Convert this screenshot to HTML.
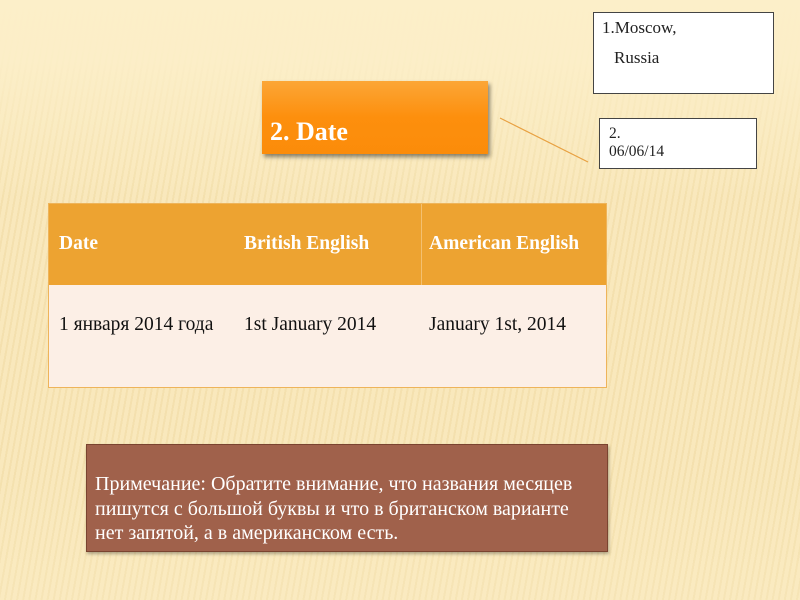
<!DOCTYPE html>
<html><head><meta charset="utf-8"><style>
body{margin:0;width:800px;height:600px;overflow:hidden;position:relative;font-family:"Liberation Serif","Noto Serif CJK SC",serif;
background:
linear-gradient(to bottom,#fcefc9 0px,rgba(252,239,201,0.9) 60px,rgba(252,239,201,0) 200px,rgba(252,239,201,0) 470px,rgba(252,239,201,0.3) 600px),
repeating-linear-gradient(100deg,rgba(220,190,110,0.18) 0 2px,rgba(0,0,0,0) 2px 6px),
#f9e8bc;}
.abs{position:absolute;box-sizing:border-box;white-space:nowrap}
</style></head><body>
<div class="abs" style="left:262px;top:81px;width:226px;height:73px;background:linear-gradient(#fca636,#fd8f0d 50%,#fb8c0a);box-shadow:2px 3px 4px rgba(0,0,0,0.45);color:#fff;font-weight:bold;font-size:26px;padding:36px 0 0 8px">2. Date</div>
<svg class="abs" style="left:0;top:0" width="800" height="600"><line x1="500" y1="118" x2="588" y2="162" stroke="#e8a040" stroke-width="1.2"/></svg>
<div class="abs" style="left:593px;top:12px;width:181px;height:82px;background:#fff;border:1px solid #444;font-size:17px;color:#222;padding:5px 0 0 8px;line-height:20px">1.Moscow,<br><span style="margin-left:12px;line-height:40px">Russia</span></div>
<div class="abs" style="left:599px;top:118px;width:158px;height:51px;background:#fff;border:1px solid #444;font-size:15.5px;color:#222;padding:6px 0 0 9px;line-height:18px">2.<br>06/06/14</div>
<div class="abs" style="left:48px;top:203px;width:559px;height:185px;border:1px solid #eeb45a;background:#fcefe6">
<div class="abs" style="left:0;top:0;width:557px;height:81px;background:#eda331"></div>
<div class="abs" style="left:372px;top:0;width:1px;height:81px;background:#f4c070"></div>
<div class="abs" style="left:10px;top:29px;color:#fff;font-weight:bold;font-size:19.5px">Date</div>
<div class="abs" style="left:195px;top:29px;color:#fff;font-weight:bold;font-size:19.5px">British English</div>
<div class="abs" style="left:380px;top:29px;color:#fff;font-weight:bold;font-size:19.5px">American English</div>
<div class="abs" style="left:10px;top:110px;color:#111;font-size:19.5px">1 января 2014 года</div>
<div class="abs" style="left:195px;top:110px;color:#111;font-size:19.5px">1st January 2014</div>
<div class="abs" style="left:380px;top:110px;color:#111;font-size:19.5px">January 1st, 2014</div>
</div>
<div class="abs" style="left:86px;top:444px;width:522px;height:108px;background:#a0614b;border:1px solid #7a4430;box-shadow:1px 2px 3px rgba(0,0,0,0.3);color:#fff;font-size:20px;line-height:24.5px;padding:27px 0 0 8px">Примечание: Обратите внимание, что названия месяцев<br>пишутся с большой буквы и что в британском варианте<br>нет запятой, а в американском есть.</div>
</body></html>
